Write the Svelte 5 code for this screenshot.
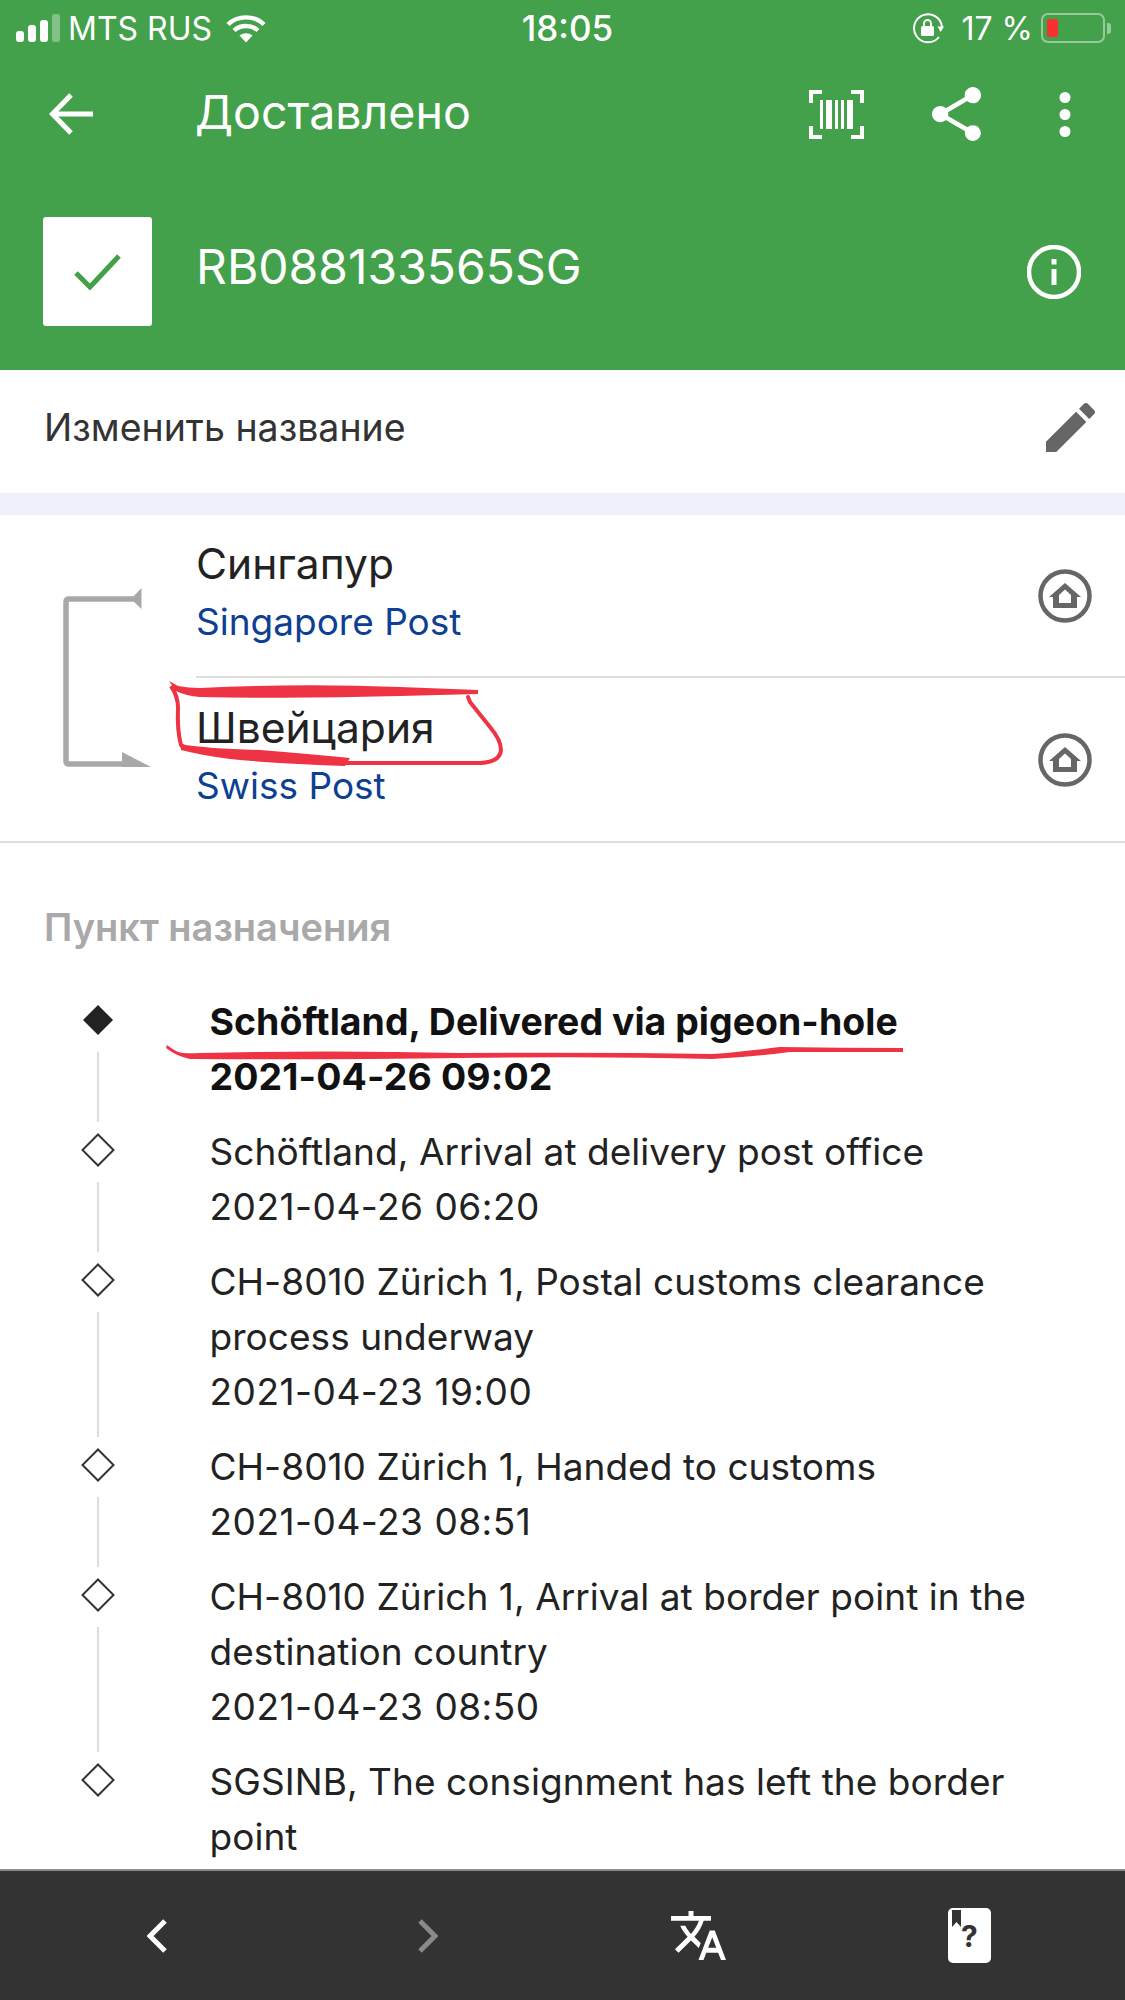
<script>
	const events = [
		{ lines: ['Schöftland, Delivered via pigeon-hole', '2021-04-26 09:02'], current: true },
		{ lines: ['Schöftland, Arrival at delivery post office', '2021-04-26 06:20'] },
		{ lines: ['CH-8010 Zürich 1, Postal customs clearance', 'process underway', '2021-04-23 19:00'] },
		{ lines: ['CH-8010 Zürich 1, Handed to customs', '2021-04-23 08:51'] },
		{ lines: ['CH-8010 Zürich 1, Arrival at border point in the', 'destination country', '2021-04-23 08:50'] },
		{ lines: ['SGSINB, The consignment has left the border', 'point'], last: true }
	];
	const countries = [
		{ name: 'Сингапур', post: 'Singapore Post' },
		{ name: 'Швейцария', post: 'Swiss Post' }
	];
	const isDate = (line) => /^\d{4}-/.test(line);
</script>

<div class="app">
	<header class="header">
		<div class="status">
			<div class="status-left">
				<svg class="signal" width="44" height="28" viewBox="0 0 44 28">
					<rect x="0" y="17" width="8" height="11" rx="3" fill="#fff" />
					<rect x="12" y="11" width="8" height="17" rx="3" fill="#fff" />
					<rect x="24" y="6" width="8" height="22" rx="3" fill="#fff" />
					<rect x="36" y="0" width="8" height="28" rx="3" fill="#fff" opacity="0.35" />
				</svg>
				<span>MTS RUS</span>
				<svg class="wifi" width="40" height="29" viewBox="0 0 40 29" fill="none" stroke="#fff" stroke-width="4.4">
					<path d="M2 10.5C11.5 1 28.500 1 38 10.500" />
					<path d="M8 16.500C14.500 10.500 25.500 10.500 32 16.500" />
					<path d="M13.500 21.500L20 28.500L26.500 21.500C22.500 18.500 17.500 18.500 13.500 21.500Z" fill="#fff" stroke="none" />
				</svg>
			</div>
			<div class="time">18:05</div>
			<div class="status-right">
				<svg width="32" height="32" viewBox="0 0 32 32" fill="none">
					<path d="M27 25A14 14 0 1 1 30 15" stroke="#fff" stroke-width="2" />
					<path d="M25.500 14.500H32L28.700 20Z" fill="#fff" />
					<rect x="9" y="14" width="13" height="10" rx="1.500" fill="#fff" />
					<path d="M12 14V11.500A3.500 3.500 0 0 1 19 11.500V14" stroke="#fff" stroke-width="2" />
				</svg>
				<span class="pct">17 %</span>
				<div class="battery">
					<div class="battery-body"><div class="battery-level"></div></div>
					<div class="battery-cap"></div>
				</div>
			</div>
		</div>

		<div class="toolbar">
			<svg class="back" width="44" height="42" viewBox="0 0 44 42" fill="none" stroke="#fff" stroke-width="5">
				<path d="M44 21H4" />
				<path d="M22 2L3.500 21L22 40" />
			</svg>
			<div class="title">Доставлено</div>
			<div class="actions">
				<svg width="55" height="49" viewBox="0 0 55 49" fill="#fff">
					<path d="M0 0H13V4H4V13H0Z M42 0H55V13H51V4H42Z M0 36H4V45H13V49H0Z M51 36H55V49H42V45H51Z" />
					<rect x="11" y="10" width="3" height="29" />
					<rect x="17" y="10" width="6" height="29" />
					<rect x="26" y="10" width="3" height="29" />
					<rect x="32" y="10" width="3" height="29" />
					<rect x="38" y="10" width="6" height="29" />
				</svg>
				<svg width="49" height="54" viewBox="3 2 18 19.920" preserveAspectRatio="none" fill="#fff">
					<path d="M18 16.080c-.76 0-1.440.3-1.960.77L8.910 12.700c.05-.23.090-.46.090-.7s-.04-.47-.09-.7l7.050-4.110c.54.5 1.250.81 2.040.81 1.660 0 3-1.340 3-3s-1.340-3-3-3-3 1.340-3 3c0 .24.04.47.09.7L8.040 9.810C7.500 9.310 6.790 9 6 9c-1.660 0-3 1.340-3 3s1.340 3 3 3c.79 0 1.500-.31 2.040-.81l7.120 4.160c-.05.21-.08.43-.08.65 0 1.610 1.310 2.920 2.920 2.920 1.610 0 2.920-1.310 2.920-2.920s-1.310-2.920-2.920-2.920z" />
				</svg>
				<svg class="dots" width="12" height="45" viewBox="0 0 12 45" fill="#fff">
					<circle cx="6" cy="5.500" r="5.500" />
					<circle cx="6" cy="22.500" r="5.500" />
					<circle cx="6" cy="39.500" r="5.500" />
				</svg>
			</div>
		</div>

		<div class="parcel">
			<div class="tile">
				<svg width="47" height="36" viewBox="0 0 47 36" fill="none" stroke="#43a047" stroke-width="5">
					<path d="M2 19L16 33L45 2" />
				</svg>
			</div>
			<div class="code">RB088133565SG</div>
			<svg class="info" width="54" height="54" viewBox="0 0 54 54" fill="none" stroke="#fff">
				<circle cx="27" cy="27" r="25" stroke-width="4.500" />
				<rect x="24.500" y="24" width="5" height="16" fill="#fff" stroke="none" />
				<rect x="24.500" y="14" width="5" height="5.500" fill="#fff" stroke="none" />
			</svg>
		</div>
	</header>

	<div class="rename">
		<span>Изменить название</span>
		<svg width="49" height="49" viewBox="3 3 18 18" fill="#666">
			<path d="M3 17.250V21h3.750L17.810 9.940l-3.750-3.750L3 17.250z M20.710 7.040c.39-.39.39-1.020 0-1.410l-2.340-2.340c-.39-.39-1.020-.39-1.410 0l-1.830 1.830 3.750 3.750 1.830-1.830z" />
		</svg>
	</div>

	<div class="band"></div>

	<section class="route">
		<svg class="bracket" width="196" height="326" viewBox="0 0 196 326">
			<path d="M134 84H69Q66 84 66 87V246Q66 249 69 249H125" fill="none" stroke="#a8a8a8" stroke-width="5.500" />
			<path d="M141.500 73V94L131 84Z" fill="#a8a8a8" />
			<path d="M122 237L151 252H122Z" fill="#a8a8a8" />
		</svg>
		<div class="countries">
			{#each countries as c}
				<div class="country">
					<div class="country-text">
						<div class="country-name">{c.name}</div>
						<div class="country-post">{c.post}</div>
					</div>
					<svg width="54" height="54" viewBox="0 0 54 54">
						<circle cx="27" cy="27" r="24.500" fill="none" stroke="#666" stroke-width="4.500" />
						<path fill="#666" fill-rule="evenodd" d="M27 14L43 28H39V39H15V28H11Z M27 20.500L21 26V34H33V26Z" />
					</svg>
				</div>
			{/each}
		</div>
	</section>

	<section class="history">
		<h2 class="history-title">Пункт назначения</h2>
		<ul class="events">
			{#each events as ev}
				<li class="event" class:current={ev.current}>
					<div class="marker">
						<svg class="diamond" width="34" height="34" viewBox="0 0 34 34">
							{#if ev.current}
								<path d="M17 2L32 17L17 32L2 17Z" fill="#222" />
							{:else}
								<path d="M17 1.500L32.500 17L17 32.500L1.500 17Z" fill="#fff" stroke="#333" stroke-width="2" />
							{/if}
						</svg>
						{#if !ev.last}<div class="stem"></div>{/if}
					</div>
					<div class="event-text">
						{#each ev.lines as line}
							<div class:date={isDate(line)}>{line}</div>
						{/each}
					</div>
				</li>
			{/each}
		</ul>
	</section>

	<nav class="bottom">
		<div class="bottom-item">
			<svg width="20" height="34" viewBox="0 0 20 34" fill="none" stroke="#fff" stroke-width="5"><path d="M18 2L3 17L18 32" /></svg>
		</div>
		<div class="bottom-item">
			<svg width="20" height="34" viewBox="0 0 20 34" fill="none" stroke="#8a8a8a" stroke-width="5"><path d="M2 2L17 17L2 32" /></svg>
		</div>
		<div class="bottom-item">
			<svg width="55" height="49" viewBox="1 2 22 20" preserveAspectRatio="none" fill="#fff">
				<path d="M12.870 15.070l-2.540-2.510.03-.03c1.740-1.940 2.980-4.170 3.710-6.530H17V4h-7V2H8v2H1v1.990h11.170C11.500 7.920 10.440 9.750 9 11.350 8.070 10.320 7.300 9.190 6.690 8h-2c.73 1.630 1.730 3.170 2.980 4.560l-5.090 5.020L4 19l5-5 3.110 3.110.76-2.040zM18.500 10h-2L12 22h2l1.120-3h4.750L21 22h2l-4.500-12zm-2.620 7l1.620-4.330L19.120 17h-3.240z" />
			</svg>
		</div>
		<div class="bottom-item">
			<div class="card">
				<svg class="ribbon" width="10" height="17" viewBox="0 0 10 17"><path d="M0 0H9V17L4.500 12L0 17Z" fill="#333" /></svg>
				<span>?</span>
			</div>
		</div>
	</nav>

	<svg class="marks" width="1125" height="2000" viewBox="0 0 1125 2000" fill="none">
		<path fill="#ee3344" d="M169 681L178 686Q188 688 200 688Q300 683 400 687L478 690V694L400 696Q300 699 200 697Q186 696 176 691Z" />
		<path stroke="#ee3344" stroke-width="4" d="M171 686Q178 696 178 708Q177 730 181 745Q186 750 215 753" />
		<path fill="#ee3344" d="M180 744Q210 749 260 750Q310 754 350 758L345 766Q280 764 230 759Q200 755 181 750Z" />
		<path stroke="#ee3344" stroke-width="4" d="M340 763H480Q500 762 501 750Q501 740 490 727L470 702" />
		<path stroke="#ee3344" stroke-width="4" stroke-linecap="round" d="M468 697L470 702" />
		<path fill="#ee3344" d="M167 1045Q172 1049 178 1052Q184 1054 200 1053Q330 1050 460 1053Q600 1052 712 1054Q740 1052 780 1047Q840 1048 903 1048V1052Q840 1052 790 1052Q750 1057 712 1059Q600 1056 460 1058Q330 1060 190 1059Q176 1056 166 1048Z" />
	</svg>
</div>

<style>
	:global(body) {
		margin: 0;
		background: #fff;
	}

	.app {
		position: relative;
		display: flex;
		flex-direction: column;
		width: 1125px;
		height: 2000px;
		overflow: hidden;
		background: #fff;
		color: #222;
		font-family: Inter, 'Noto Sans', sans-serif;
	}

	.header {
		flex: none;
		height: 370px;
		box-sizing: border-box;
		background: #43a04b;
		color: #fff;
	}

	.status {
		display: grid;
		grid-template-columns: 1fr auto 1fr;
		align-items: center;
		height: 56px;
		padding: 0 14px 0 16px;
		font-size: 32px;
	}

	.status-left {
		display: flex;
		align-items: center;
	}

	.status-left span {
		margin-left: 8px;
	}

	.wifi {
		margin-left: 14px;
	}

	.time {
		margin-left: 8px;
		font-size: 35px;
		font-weight: 500;
	}

	.status-right {
		display: flex;
		align-items: center;
		justify-content: flex-end;
	}

	.pct {
		margin-left: 17px;
		margin-right: 8px;
	}

	.battery {
		display: flex;
		align-items: center;
	}

	.battery-body {
		box-sizing: border-box;
		width: 64px;
		height: 30px;
		padding: 4px;
		border: 2px solid rgba(255, 255, 255, 0.45);
		border-radius: 7px;
	}

	.battery-level {
		width: 11px;
		height: 18px;
		border-radius: 2px;
		background: #f93030;
	}

	.battery-cap {
		width: 4px;
		height: 11px;
		margin-left: 2px;
		border-radius: 0 3px 3px 0;
		background: rgba(255, 255, 255, 0.45);
	}

	.toolbar {
		display: flex;
		align-items: center;
		height: 116px;
		padding: 0 54px 0 49px;
	}

	.title {
		margin-left: 102px;
		margin-bottom: 5px;
		font-size: 46.500px;
	}

	.actions {
		display: flex;
		align-items: center;
		gap: 68px;
		margin-left: auto;
	}

	.dots {
		margin-left: 10px;
	}

	.parcel {
		display: flex;
		align-items: center;
		margin-top: 45px;
		padding: 0 44px 0 43px;
	}

	.tile {
		display: flex;
		align-items: center;
		justify-content: center;
		width: 109px;
		height: 109px;
		border-radius: 3px;
		background: #fff;
	}

	.code {
		margin-left: 44px;
		margin-bottom: 11px;
		font-size: 48px;
	}

	.info {
		margin-left: auto;
	}

	.rename {
		flex: none;
		display: flex;
		align-items: center;
		justify-content: space-between;
		height: 123px;
		box-sizing: border-box;
		padding: 0 30px 8px 44px;
		font-size: 37.500px;
		color: #333;
	}

	.band {
		flex: none;
		height: 22px;
		background: #eef1fa;
	}

	.route {
		flex: none;
		display: flex;
		border-bottom: 2px solid #ddd;
	}

	.bracket {
		flex: none;
	}

	.countries {
		flex: 1;
	}

	.country {
		display: flex;
		align-items: center;
		justify-content: space-between;
		box-sizing: border-box;
		height: 163px;
		padding-right: 33px;
	}

	.country:first-child {
		border-bottom: 2px solid #ddd;
	}

	.country-text {
		margin-top: -4px;
	}

	.country-name {
		font-size: 42.500px;
		line-height: 52px;
	}

	.country-post {
		margin-top: 4px;
		font-size: 37px;
		line-height: 55px;
		color: #0d3f93;
	}

	.history {
		flex: 1;
		min-height: 0;
	}

	.history-title {
		margin: 65px 0 0 44px;
		font-size: 38px;
		line-height: 38px;
		font-weight: 600;
		color: #a9a9a9;
	}

	.events {
		margin: 49px 0 0;
		padding: 0;
		list-style: none;
	}

	.event {
		display: flex;
	}

	.marker {
		display: flex;
		flex-direction: column;
		align-items: center;
		flex: none;
		width: 195px;
		padding-top: 8px;
	}

	.diamond {
		flex: none;
	}

	.stem {
		flex: 1;
		width: 2px;
		margin: 15px 0 3px;
		background: #ddd;
	}

	.event-text {
		margin-left: 14.500px;
		padding-bottom: 21px;
		font-size: 37px;
		line-height: 54.600px;
		letter-spacing: 0.05px;
		color: #222;
	}

	.date {
		letter-spacing: 0.5px;
	}

	.current .event-text {
		font-size: 37.400px;
		font-weight: 700;
		color: #111;
	}

	.current .date {
		letter-spacing: 0.15px;
	}

	.bottom {
		flex: none;
		display: grid;
		grid-template-columns: repeat(4, 271px);
		align-items: center;
		box-sizing: border-box;
		height: 131px;
		padding-left: 21px;
		border-top: 2px solid #8a8a8a;
		background: #333;
	}

	.bottom-item {
		display: flex;
		justify-content: center;
	}

	.card {
		position: relative;
		display: flex;
		align-items: center;
		justify-content: center;
		width: 43px;
		height: 55px;
		border-radius: 5px;
		background: #fff;
		color: #333;
		font-size: 30px;
		font-weight: 700;
	}

	.ribbon {
		position: absolute;
		top: 2px;
		left: 4px;
	}

	.marks {
		position: absolute;
		top: 0;
		left: 0;
		pointer-events: none;
	}
</style>
